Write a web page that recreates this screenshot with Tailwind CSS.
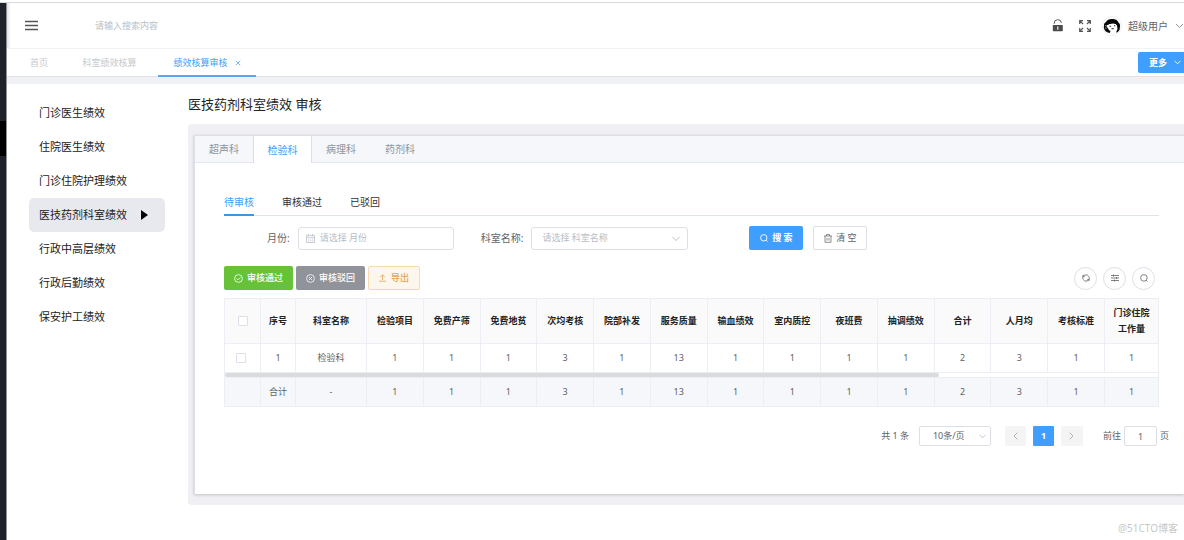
<!DOCTYPE html>
<html lang="zh-CN">
<head>
<meta charset="utf-8">
<title>绩效核算审核</title>
<script src="https://cdn.jsdelivr.net/npm/@tailwindcss/browser@4"></script>
</head>
<body class="flex min-h-screen flex-col overflow-x-hidden bg-white font-['Noto_Sans','Noto_Sans_CJK_SC',sans-serif] text-[9px] leading-4 text-[#606266]">
<div class="mt-[2px] h-px shrink-0 bg-[#d5d8de]"></div>
<div class="flex flex-1">
  <!-- collapsed main navigation -->
  <aside class="w-[7px] shrink-0 border-r border-[#8d9096] bg-[#20222a] pt-[118px]"><div class="h-[35px] bg-black"></div></aside>

  <div class="flex min-w-0 flex-1 flex-col">
    <header class="flex h-[46px] shrink-0 items-center border-b border-[#f2f3f5] bg-linear-to-r from-[#dfe3ea] to-white to-[4px] pl-[18px]">
      <button aria-label="菜单" class="text-[#555]"><svg class="block" width="13" height="11" viewBox="0 0 13 11" stroke="currentColor" stroke-width="1.3"><path d="M0 1.500h13M0 5.500h13M0 9.500h13"/></svg></button>
      <input aria-label="搜索内容" placeholder="请输入搜索内容" class="ml-[57px] w-[200px] outline-none placeholder:text-[#b9bec8]">
      <div class="ml-auto flex items-center">
        <button aria-label="锁屏" class="text-[#4c4c4c]"><svg class="block" width="12" height="13" viewBox="0 0 12 13"><path d="M2.200 5V4.500a3.600 3.600 0 0 1 7.200-.5" fill="none" stroke="currentColor" stroke-width=".9"/><rect x=".8" y="6" width="10" height="6.200" rx=".6" fill="currentColor"/><path d="M5.800 7.500v3.200" stroke="#fff" stroke-width="1.100"/></svg></button>
        <button aria-label="全屏" class="ml-[15px] text-[#555]"><svg class="block" width="12" height="12" viewBox="0 0 12 12" fill="none" stroke="currentColor" stroke-width="1.200"><path d="M.7 4V.7H4M.7.7l3.300 3.300M8 .7h3.300V4M11.300.7 8 4M.7 8v3.300H4M.7 11.300 4 8M8 11.300h3.300V8M11.300 11.300 8 8"/></svg></button>
        <svg class="ml-[11px]" width="20" height="20" viewBox="0 0 20 20"><circle cx="10" cy="10" r="9.500" fill="#fff" stroke="#eee"/><path d="M5.500 16.500C2.500 15 1.300 12 2 9.500 1.800 7.500 3 6.500 4 6c1-2 3.500-3.200 6-3 3.500-.2 6 1.500 6.500 3.500 1.500 1 2 3 1.300 5 .2 2-.8 3.800-2.300 4.700l-1.500.3 1.500-3.500-.5-3.500-1.500-1.500-2.500-.500-3 .500-1.500 1-.5 2 1 3z" fill="#080808"/><path d="M4.500 9.500c1-.8 2.500-.5 3.500-1.500 2 .3 4-.3 5.500.2 1 1.500 1.300 3 .8 4.500-1.300 1.800-3.300 2.300-5.300 2-2-.5-3.500-2-4.500-5.200z" fill="#fff"/><path d="M7.500 10.300h1.600M12 9.800h1.300M9.500 12.700h2.300" stroke="#111" stroke-width=".9"/><path d="m6.500 13.800 2 1.200-.8 2-2-.5z" fill="#080808"/><path d="M3.200 9.500l1.200 1M3.200 12l1.300.3" stroke="#fff" stroke-width=".7"/></svg>
        <button class="ml-[6px] flex items-center gap-[7px] text-[10px]">超级用户<svg width="9" height="6" viewBox="0 0 9 6" fill="none" stroke="#888" stroke-width=".9"><path d="m1 1 3.500 3.500L8 1"/></svg></button>
      </div>
    </header>

    <nav class="flex h-[28px] shrink-0 items-stretch gap-[7px] border-b border-[#dfe2e8] pl-[10px] text-[#c6c8cc]">
      <a href="#" class="flex w-[44px] items-center justify-center">首页</a>
      <a href="#" class="flex w-[83px] items-center justify-center">科室绩效核算</a>
      <a href="#" class="-mb-px flex w-[98px] items-center justify-center gap-[7px] border-b-2 border-[#5aa6f2] pt-[2px] text-[#409eff]">绩效核算审核<svg width="6" height="6" viewBox="0 0 6 6" stroke="currentColor" stroke-width=".7"><path d="m.7.700 4.600 4.600M5.300.700.700 5.300"/></svg></a>
      <button class="ml-auto flex h-[21px] w-[46px] items-center gap-[7px] self-center rounded-l-[2px] bg-[#409eff] pl-[11px] font-bold text-white">更多<svg width="7" height="5" viewBox="0 0 7 5" fill="none" stroke="currentColor" stroke-width=".9"><path d="m.5.800 3 3 3-3"/></svg></button>
    </nav>
    <div class="h-[7px] shrink-0 bg-[#f0f1f5]"></div>

    <div class="flex flex-1">
      <aside class="w-[181px] shrink-0 pt-[12px] pr-[23px] pl-[22px] text-[11px] text-[#222]">
        <a href="#" class="flex h-[34px] items-center px-[10px]">门诊医生绩效</a>
        <a href="#" class="flex h-[34px] items-center px-[10px]">住院医生绩效</a>
        <a href="#" class="flex h-[34px] items-center px-[10px]">门诊住院护理绩效</a>
        <a href="#" class="flex h-[34px] items-center justify-between rounded-[5px] bg-[#e8e9ef] pr-[17px] pl-[10px]">医技药剂科室绩效<svg width="7" height="10" viewBox="0 0 7 10"><path d="M0 0l7 5-7 5z"/></svg></a>
        <a href="#" class="flex h-[34px] items-center px-[10px]">行政中高层绩效</a>
        <a href="#" class="flex h-[34px] items-center px-[10px]">行政后勤绩效</a>
        <a href="#" class="flex h-[34px] items-center px-[10px]">保安护工绩效</a>
      </aside>

      <main class="flex min-w-0 flex-1 flex-col">
        <h1 class="flex h-[40px] items-center text-[13px] text-[#222]">医技药剂科室绩效 审核</h1>
        <div class="rounded-l-[4px] bg-[#f0f0f4] pt-[11px] pb-[11px] pl-[6px]">
          <section class="border-t border-l border-[#dcdfe6] bg-white pb-[48px] shadow-[0_1px_3px_rgba(0,0,0,0.2)]">
            <div class="flex h-[27px] border-b border-[#e4e7ed] bg-[#f5f7fa] text-[10px] text-[#909399]">
              <button class="w-[58px]">超声科</button>
              <button class="-mb-px w-[59px] border-x border-[#dcdfe6] bg-white text-[#409eff]">检验科</button>
              <button class="w-[58px]">病理科</button>
              <button class="w-[60px]">药剂科</button>
            </div>

            <div class="pt-[26px] pr-[25px] pl-[29px]">
              <div class="flex h-[27px] gap-[28px] border-b border-[#dfe4ea] text-[10px] text-[#303133]">
                <button class="-mb-px border-b-2 border-[#4394d8] text-[#409eff]">待审核</button>
                <button>审核通过</button>
                <button>已驳回</button>
              </div>

              <form class="mt-[10px] flex h-[24px] items-center pl-[43px]">
                <label for="month" class="text-[10px]">月份:</label>
                <div class="ml-[8px] flex h-[23px] w-[156px] items-center gap-[5px] rounded-[3px] border border-[#dcdfe6] px-[7px]">
                  <svg class="shrink-0" width="9" height="9" viewBox="0 0 9 9" fill="none" stroke="#b4b9c2" stroke-width=".7"><path d="M.5 1.300h8v7.200h-8zM.5 3.300h8M2.500 0v2M6.500 0v2M2 5h1.200M4 5h1.200M6 5h1.200M2 6.800h1.200M4 6.800h1.200M6 6.800h1.200"/></svg>
                  <input id="month" placeholder="请选择 月份" class="w-full min-w-0 outline-none placeholder:text-[#b8bcc5]">
                </div>
                <label for="dept" class="ml-[27px] text-[10px]">科室名称:</label>
                <div class="relative ml-[8px] w-[157px]">
                  <select id="dept" class="block h-[23px] w-full appearance-none rounded-[3px] border border-[#dcdfe6] bg-white px-[10px] text-[#b8bcc5]"><option>请选择 科室名称</option></select>
                  <svg class="pointer-events-none absolute top-[9px] right-[8px]" width="8" height="6" viewBox="0 0 8 6" fill="none" stroke="#b4b9c2" stroke-width=".9"><path d="m.500 1 3.500 3.500L7.500 1"/></svg>
                </div>
                <button type="button" class="ml-[61px] flex h-[24px] w-[54px] items-center justify-center gap-[4px] rounded-[2px] bg-[#409eff] font-bold text-white"><svg width="8" height="8" viewBox="0 0 8 8" fill="none" stroke="currentColor" stroke-width=".9"><circle cx="3.800" cy="3.800" r="3.200"/><path d="m6.200 6.200 1.400 1.400"/></svg>搜 索</button>
                <button type="button" class="ml-[10px] flex h-[24px] w-[54px] items-center justify-center gap-[4px] rounded-[2px] border border-[#dcdfe6] bg-white"><svg width="8" height="9" viewBox="0 0 8 9" fill="none" stroke="currentColor" stroke-width=".7"><path d="M0 2h8M2.500 2V.5h3V2M1 2v6.300h6V2M3 3.800v2.800M5 3.800v2.800"/></svg>清 空</button>
              </form>

              <div class="mt-[16px] flex items-center">
                <button class="flex h-[24px] w-[69px] items-center justify-center gap-[4px] rounded-[2px] bg-[#67c23a] text-white"><svg width="9" height="9" viewBox="0 0 9 9" fill="none" stroke="currentColor" stroke-width=".8"><circle cx="4.500" cy="4.500" r="3.900"/><path d="m2.600 4.500 1.400 1.400L6.500 3.400"/></svg><span class="font-medium">审核通过</span></button>
                <button class="ml-[3px] flex h-[24px] w-[69px] items-center justify-center gap-[4px] rounded-[2px] bg-[#909399] text-white"><svg width="9" height="9" viewBox="0 0 9 9" fill="none" stroke="currentColor" stroke-width=".8"><circle cx="4.500" cy="4.500" r="3.900"/><path d="m3 3 3 3M6 3 3 6"/></svg><span class="font-medium">审核驳回</span></button>
                <button class="ml-[3px] flex h-[24px] w-[52px] items-center justify-center gap-[5px] rounded-[2px] border border-[#f5dab1] bg-[#fdf6ec] text-[#e0a558]"><svg width="7" height="8" viewBox="0 0 7 8" fill="none" stroke="currentColor" stroke-width=".8"><path d="M0 7.200h7M3.500 6V1M1 3.300 3.500.800 6 3.300"/></svg><span class="font-medium">导出</span></button>
                <div class="mr-[4px] ml-auto flex gap-[6px]">
                  <button aria-label="刷新" class="flex size-[23px] items-center justify-center rounded-full border border-[#dcdfe6]"><svg width="8" height="8" viewBox="0 0 8 8" fill="none" stroke="currentColor" stroke-width=".8"><path d="M1 5.200A3.200 3.200 0 0 1 3 1a3.200 3.200 0 0 1 3.800 1.500M7 2.800A3.200 3.200 0 0 1 5 7a3.200 3.200 0 0 1-3.800-1.500M1 .9v1.700h1.700M7 7.100V5.400H5.300"/></svg></button>
                  <button aria-label="列设置" class="flex size-[23px] items-center justify-center rounded-full border border-[#dcdfe6]"><svg width="8" height="8" viewBox="0 0 8 8" fill="none" stroke="currentColor" stroke-width=".8"><path d="M0 1.500h8M0 4h8M0 6.500h8M2.500.500v2M5.500 3v2M3.500 5.500v2"/></svg></button>
                  <button aria-label="显示搜索" class="flex size-[23px] items-center justify-center rounded-full border border-[#dcdfe6]"><svg width="8" height="8" viewBox="0 0 8 8" fill="none" stroke="currentColor" stroke-width=".8"><circle cx="3.900" cy="3.900" r="3.300"/><path d="m6.200 6.200 1.400 1.400"/></svg></button>
                </div>
              </div>

              <table class="mt-[8px] w-full table-fixed border-collapse text-center [&_td]:border-x [&_td]:border-[#ebeef5] [&_th]:border [&_th]:border-[#ebeef5] [&_th]:px-0">
                <colgroup><col class="w-[36px]"><col class="w-[35px]"><col class="w-[71px]"><col><col><col><col><col><col><col><col><col><col><col><col><col><col class="w-[54px]"></colgroup>
                <thead>
                  <tr class="h-[45px] bg-[#fafafa] text-[#222]">
                    <th><input type="checkbox" aria-label="全选" class="mx-auto block size-[10px] appearance-none rounded-[1px] border border-[#dcdfe6] bg-white"></th>
                    <th>序号</th><th>科室名称</th><th>检验项目</th><th>免费产筛</th><th>免费地贫</th><th>次均考核</th><th>院部补发</th><th>服务质量</th><th>输血绩效</th><th>室内质控</th><th>夜班费</th><th>抽调绩效</th><th>合计</th><th>人月均</th><th>考核标准</th><th>门诊住院<br>工作量</th>
                  </tr>
                </thead>
                <tbody>
                  <tr class="h-[29px]">
                    <td class="pr-[3px]"><input type="checkbox" aria-label="选择第1行" class="mx-auto block size-[10px] appearance-none rounded-[1px] border border-[#dcdfe6] bg-white"></td>
                    <td>1</td><td>检验科</td><td>1</td><td>1</td><td>1</td><td>3</td><td>1</td><td>13</td><td>1</td><td>1</td><td>1</td><td>1</td><td>2</td><td>3</td><td>1</td><td>1</td>
                  </tr>
                  <tr class="h-[5px] border-y border-[#ebeef5]"><td colspan="17" class="p-0"><div class="h-[4px] w-[76.5%] rounded-full bg-[#dadbdd]"></div></td></tr>
                </tbody>
                <tfoot>
                  <tr class="h-[29px] border-b border-[#ebeef5] bg-[#f5f7fa]">
                    <td></td><td>合计</td><td>-</td><td>1</td><td>1</td><td>1</td><td>3</td><td>1</td><td>13</td><td>1</td><td>1</td><td>1</td><td>1</td><td>2</td><td>3</td><td>1</td><td>1</td>
                  </tr>
                </tfoot>
              </table>
            </div>

            <div class="mt-[19px] flex h-[20px] items-center justify-end pr-[15px]">
              <span>共 1 条</span>
              <div class="relative ml-[10px] w-[72px]">
                <select aria-label="每页条数" class="block h-[20px] w-full appearance-none rounded-[2px] border border-[#dcdfe6] bg-white pl-[13px]"><option>10条/页</option></select>
                <svg class="pointer-events-none absolute top-[8px] right-[5px]" width="7" height="5" viewBox="0 0 7 5" fill="none" stroke="#b4b9c2" stroke-width=".8"><path d="m.500.800 3 3 3-3"/></svg>
              </div>
              <button aria-label="上一页" class="ml-[14px] flex h-[20px] w-[21px] items-center justify-center rounded-[1px] bg-[#f4f4f5]"><svg width="5" height="8" viewBox="0 0 5 8" fill="none" stroke="#b0b4bc"><path d="M4.300.700 1 4l3.300 3.300"/></svg></button>
              <button class="ml-[7px] h-[20px] w-[21px] rounded-[1px] bg-[#409eff] font-bold text-white">1</button>
              <button aria-label="下一页" class="ml-[7px] flex h-[20px] w-[22px] items-center justify-center rounded-[1px] bg-[#f4f4f5]"><svg width="5" height="8" viewBox="0 0 5 8" fill="none" stroke="#b0b4bc"><path d="M.700.700 4 4 .700 7.300"/></svg></button>
              <label for="page" class="ml-[20px]">前往</label>
              <input id="page" value="1" class="mr-[3px] ml-[3px] h-[20px] w-[33px] rounded-[2px] border border-[#dcdfe6] text-center">
              <span>页</span>
            </div>
          </section>
        </div>
        <footer class="mt-auto pr-[6px] pb-[4px] text-right text-[10px] text-[#c8c8c8]">@51CTO博客</footer>
      </main>
    </div>
  </div>
</div>
</body>
</html>
